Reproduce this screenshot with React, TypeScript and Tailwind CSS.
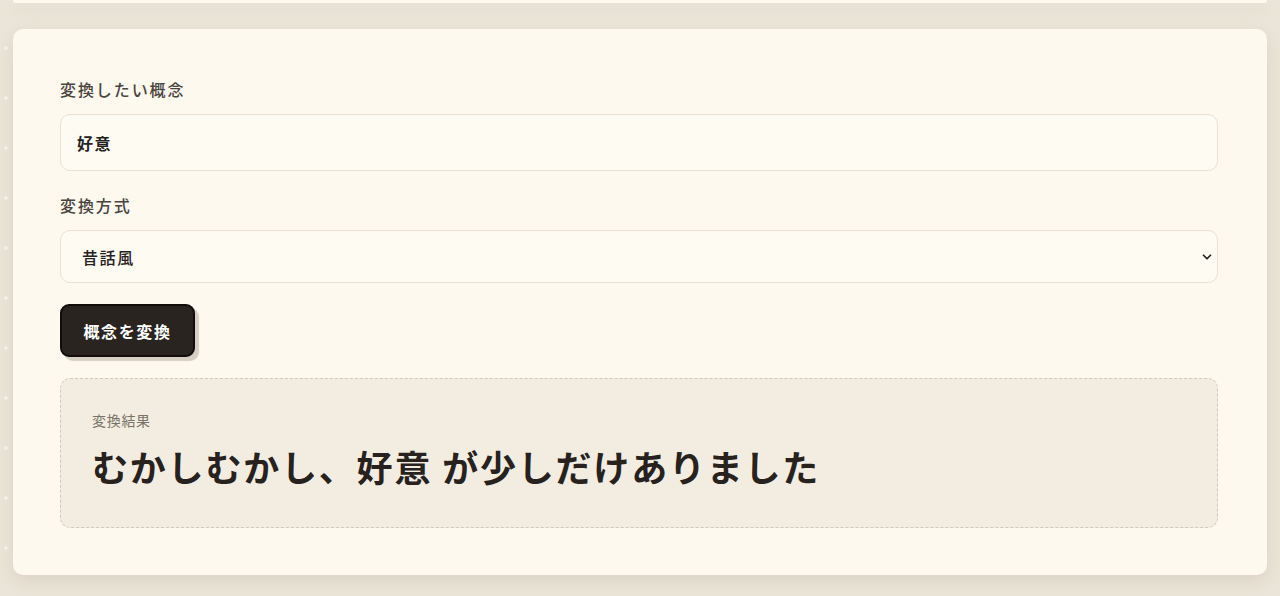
import { ChevronDown } from "lucide-react";

const font = "font-['Noto_Sans_CJK_JP','Noto_Sans',sans-serif]";

export default function App() {
  return (
    <div
      className={`${font} min-h-[596px] bg-[#ebe5d9] bg-[radial-gradient(circle,#f7f3ea_1.6px,transparent_1.8px)] [background-size:50px_50px] [background-position:-19px_23px] px-[13px] pb-[21px] flex flex-col gap-[26px]`}
    >
      {/* tail of the card above */}
      <div className="h-[3px] rounded-b-lg bg-[#fdf9ef] shadow-[0_6px_14px_rgba(150,130,100,0.2)]" />

      <main className="rounded-[10px] bg-[#fdf9ef] px-[47px] pt-[48px] pb-[47px] shadow-[0_6px_18px_rgba(150,130,100,0.18)]">
        <label className="block text-[16px] leading-[24px] font-medium tracking-[0.12em] text-[#4a443e]">
          変換したい概念
        </label>
        <input
          readOnly
          value="好意"
          className="mt-[13px] block w-[1158px] h-[57px] rounded-[10px] border border-[#e8e1d4] bg-[#fefbf3] px-[16px] text-[16px] font-semibold tracking-[0.1em] text-[#27211d] outline-none"
        />

        <label className="mt-[22px] block text-[16px] leading-[24px] font-medium tracking-[0.12em] text-[#4a443e]">
          変換方式
        </label>
        <div className="relative mt-[13px] w-[1158px]">
          <select
            defaultValue="mukashi"
            className="block w-full h-[53px] appearance-none rounded-[10px] border border-[#e8e1d4] bg-[#fefbf3] pl-[21px] pr-[40px] text-[16px] font-medium tracking-[0.1em] text-[#27211d] outline-none"
          >
            <option value="mukashi">昔話風</option>
            <option value="poem">詩的</option>
            <option value="news">ニュース風</option>
          </select>
          <ChevronDown
            size={14}
            strokeWidth={3}
            className="pointer-events-none absolute right-[4px] top-1/2 -translate-y-1/2 text-[#27211d]"
          />
        </div>

        <button className="mt-[21px] h-[53px] w-[135px] rounded-[9px] border-2 border-[#100d0b] bg-[#2a2420] text-[16px] font-bold tracking-[0.1em] text-white shadow-[4px_4px_1px_#d6cfc3]">
          概念を変換
        </button>

        <section className="mt-[21px] w-[1158px] rounded-[10px] border border-dashed border-[#cfc8bb] bg-[#f3ede1] px-[31px] pt-[31px] pb-[37px]">
          <div className="text-[14px] leading-[20px] tracking-[0.05em] text-[#7a7268]">変換結果</div>
          <div className="mt-[12px] text-[36px] leading-[48px] font-bold tracking-[0.05em] text-[#27221e]">
            むかしむかし、好意 が少しだけありました
          </div>
        </section>
      </main>
    </div>
  );
}
